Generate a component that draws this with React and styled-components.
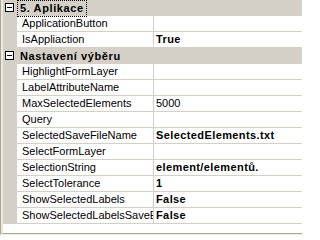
import React from "react";
import styled, { createGlobalStyle } from "styled-components";

const GlobalStyle = createGlobalStyle`
  body {
    margin: 0;
    background: #ffffff;
    font-family: "Liberation Sans", Arial, sans-serif;
  }
`;

const Frame = styled.div`
  width: 302px;
  height: 235px;
  box-sizing: border-box;
  border-left: 1px solid #aca899;
  border-bottom: 1px solid #f1efe2;
  overflow: hidden;
`;

const Inner = styled.div`
  height: 100%;
  box-sizing: border-box;
  border-left: 2px solid #ece9d8;
  border-bottom: 1px solid #aca899;
  background: #ffffff;
  display: flex;
  flex-direction: column;
`;

const Row = styled.div`
  display: grid;
  grid-template-columns: 14px 137px 1fr;
  height: 16px;
  box-sizing: border-box;
  border-bottom: 1px solid #d4d0c8;
  font-size: 11px;
  line-height: 15px;
  color: #000000;
`;

const Margin = styled.div`
  background: #d4d0c8;
`;

const Name = styled.div`
  box-sizing: border-box;
  border-right: 1px solid #d4d0c8;
  padding-left: 5px;
  white-space: nowrap;
  overflow: hidden;
`;

const Value = styled.div`
  padding-left: 2px;
  white-space: nowrap;
  overflow: hidden;
  font-weight: ${(props) => (props.$bold ? "bold" : "normal")};
  letter-spacing: ${(props) => (props.$bold ? "0.4px" : "normal")};
`;

const CategoryRow = styled.div`
  display: flex;
  align-items: flex-start;
  height: 16px;
  background: #d4d0c8;
  font-size: 11px;
  line-height: 13px;
  font-weight: bold;
  letter-spacing: 0.6px;
  color: #000000;
`;

const Toggle = styled.div`
  width: 9px;
  height: 9px;
  margin: 3px 3px 0 2px;
  box-sizing: border-box;
  border: 1px solid #000000;
  background: #ffffff;
  display: flex;
  align-items: center;
  justify-content: center;

  &::after {
    content: "";
    width: 5px;
    height: 1px;
    background: #000000;
  }
`;

const CategoryLabel = styled.div`
  padding: 1px 2px 1px 2px;
  border: 1px ${(props) => (props.$focused ? "dotted #000000" : "solid transparent")};
  white-space: nowrap;
`;

const Filler = styled.div`
  flex: 1;
  background: #ffffff;
`;

const categories = [
  {
    title: "5. Aplikace",
    focused: true,
    items: [
      { name: "ApplicationButton", value: "" },
      { name: "IsAppliaction", value: "True", bold: true },
    ],
  },
  {
    title: "Nastavení výběru",
    items: [
      { name: "HighlightFormLayer", value: "" },
      { name: "LabelAttributeName", value: "" },
      { name: "MaxSelectedElements", value: "5000" },
      { name: "Query", value: "" },
      { name: "SelectedSaveFileName", value: "SelectedElements.txt", bold: true },
      { name: "SelectFormLayer", value: "" },
      { name: "SelectionString", value: "element/elementů.", bold: true },
      { name: "SelectTolerance", value: "1", bold: true },
      { name: "ShowSelectedLabels", value: "False", bold: true },
      { name: "ShowSelectedLabelsSaveElements", value: "False", bold: true },
    ],
  },
];

function PropertyGrid() {
  return (
    <Frame>
      <Inner>
        {categories.map((cat) => (
          <React.Fragment key={cat.title}>
            <CategoryRow>
              <Toggle />
              <CategoryLabel $focused={cat.focused}>{cat.title}</CategoryLabel>
            </CategoryRow>
            {cat.items.map((item) => (
              <Row key={item.name}>
                <Margin />
                <Name>{item.name}</Name>
                <Value $bold={item.bold}>{item.value}</Value>
              </Row>
            ))}
          </React.Fragment>
        ))}
        <Filler />
      </Inner>
    </Frame>
  );
}

export default function App() {
  return (
    <>
      <GlobalStyle />
      <PropertyGrid />
    </>
  );
}
